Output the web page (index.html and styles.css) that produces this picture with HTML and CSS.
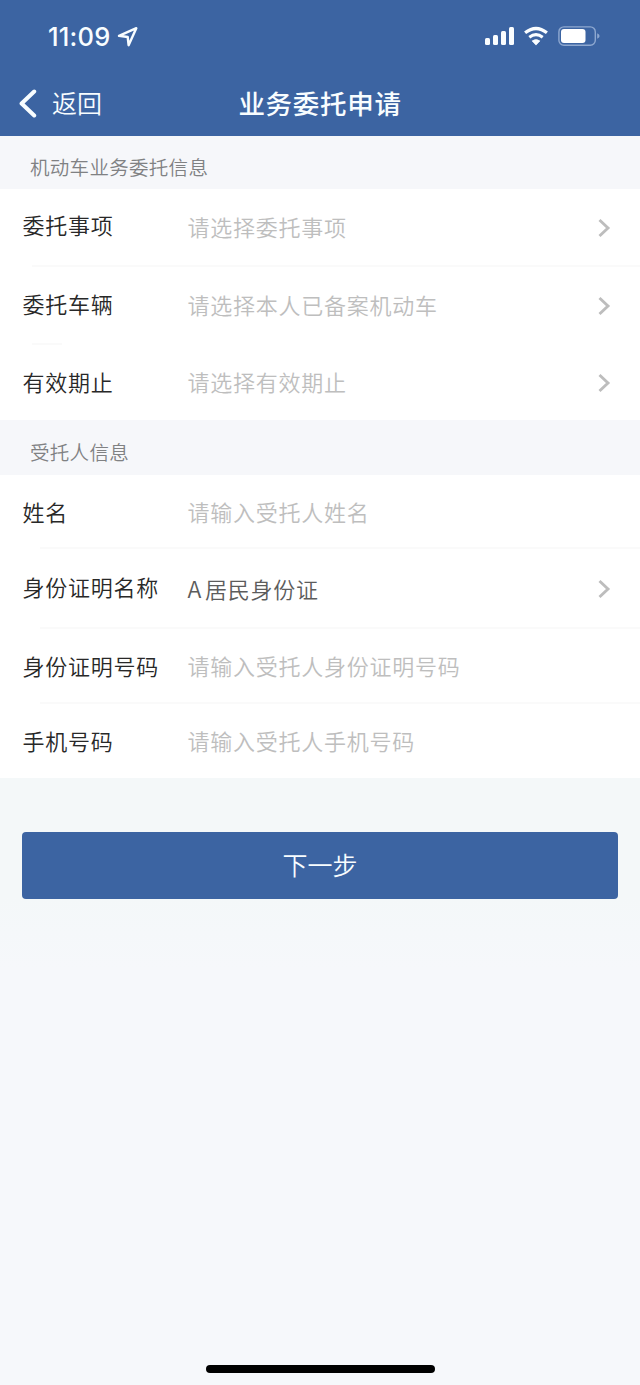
FILE: index.html
```html
<!DOCTYPE html>
<html lang="zh-CN">
<head>
<meta charset="utf-8">
<title>业务委托申请</title>
<link rel="stylesheet" href="styles.css">
</head>
<body>
<div class="screen">
  <header class="header">
    <div class="status">
      <div class="clock">
        <span class="time">11:09</span>
        <svg class="locate" width="22" height="22" viewBox="0 0 22 22"><path d="M2 9.8 19.3 2.2 11.6 19.2 10.7 11z" fill="none" stroke="#f8fdff" stroke-width="2.4" stroke-linejoin="round"/></svg>
      </div>
      <svg class="signals" width="116" height="24" viewBox="0 0 116 24">
        <g fill="#fafdff">
          <rect x="1" y="14" width="5" height="7" rx="1.5"/>
          <rect x="9" y="11" width="5" height="10" rx="1.5"/>
          <rect x="17" y="7" width="5" height="14" rx="1.5"/>
          <rect x="25" y="3" width="5" height="18" rx="1.5"/>
          <path d="M48.1 16.9Q52 14.3 55.9 16.9L52 21.1z" stroke="#fafdff" stroke-width=".7" stroke-linejoin="round"/>
        </g>
        <path d="M41.1 8.8Q52 .2 62.9 8.8" fill="none" stroke="#fafdff" stroke-width="3.2"/>
        <path d="M45.3 13.2Q52 8.1 58.7 13.2" fill="none" stroke="#fafdff" stroke-width="3"/>
        <rect x="74.9" y="2.9" width="36.4" height="18.3" rx="5" fill="none" stroke="#8ea8d0" stroke-width="1.4"/>
        <rect x="77" y="5" width="24.5" height="14" rx="3" fill="#fff"/>
        <path d="M113.2 9.2Q115.6 10.2 115.6 12T113.2 14.8z" fill="#8ea8d0"/>
      </svg>
    </div>
    <nav class="nav">
      <a class="back"><svg width="18" height="30" viewBox="0 0 18 30"><path d="M15.2 2.5 2.6 14.5 15.2 26.5" fill="none" stroke="#f8fdff" stroke-width="4" stroke-linecap="round" stroke-linejoin="round"/></svg><span>返回</span></a>
      <h1 class="title">业务委托申请</h1>
    </nav>
  </header>

  <main>
    <section class="vehicle">
      <h2 class="section-title">机动车业务委托信息</h2>
      <div class="row item"><span class="label">委托事项</span><span class="value hint">请选择委托事项</span><svg class="arrow" width="14" height="20" viewBox="0 0 14 20"><path d="M1.5 2 10 10 1.5 18"/></svg></div>
      <div class="row car"><span class="label">委托车辆</span><span class="value hint">请选择本人已备案机动车</span><svg class="arrow" width="14" height="20" viewBox="0 0 14 20"><path d="M1.5 2 10 10 1.5 18"/></svg></div>
      <div class="row expiry"><span class="label">有效期止</span><span class="value hint">请选择有效期止</span><svg class="arrow" width="14" height="20" viewBox="0 0 14 20"><path d="M1.5 2 10 10 1.5 18"/></svg></div>
    </section>
    <section class="agent">
      <h2 class="section-title">受托人信息</h2>
      <div class="row name"><span class="label">姓名</span><span class="value hint">请输入受托人姓名</span></div>
      <div class="row id-type"><span class="label">身份证明名称</span><span class="value"><span class="code">A</span>居民身份证</span><svg class="arrow" width="14" height="20" viewBox="0 0 14 20"><path d="M1.5 2 10 10 1.5 18"/></svg></div>
      <div class="row id-number"><span class="label">身份证明号码</span><span class="value hint">请输入受托人身份证明号码</span></div>
      <div class="row phone"><span class="label">手机号码</span><span class="value hint">请输入受托人手机号码</span></div>
    </section>
  </main>
  <div class="actions"><button class="next">下一步</button></div>
  <footer class="footer"><div class="home-bar"></div></footer>
</div>
</body>
</html>
```
FILE: styles.css
```css
* { box-sizing: border-box; }
body { margin: 0; background: #f6f8fb; font-family: "Noto Sans CJK SC", sans-serif; font-weight: 350; }
.screen { width: 640px; height: 1385px; display: flex; flex-direction: column; overflow: hidden; }
.header { height: 136px; background: #3c64a2; color: #f8fdff; }
.status { height: 72px; padding: 0 40px 0 48px; display: flex; justify-content: space-between; align-items: center; }
.clock { display: flex; align-items: center; gap: 7px; padding-top: 1px; }
.time { font: 500 25.5px/30px Inter, sans-serif; letter-spacing: .2px; }
.nav { height: 64px; padding: 0 19px 3px; display: grid; grid-template-columns: 1fr auto 1fr; align-items: center; }
.back { display: flex; align-items: center; gap: 15px; font-size: 25px; line-height: 36px; }
.back svg { margin-top: 2px; }
.back span { margin-top: -1px; }
.title { margin: 0; font-size: 26.5px; line-height: 38px; font-weight: 500; letter-spacing: .7px; }
.section-title { margin: 0; padding-left: 30px; font-size: 19.5px; font-weight: 350; letter-spacing: .3px; color: #808183; background: #f6f7fa; }
.vehicle .section-title { height: 53px; line-height: 61px; }
.agent .section-title { height: 55px; line-height: 64px; }
.row { display: grid; grid-template-columns: 165px 1fr 14px; align-items: start; padding: 0 28px 0 22.5px; background: #fff no-repeat right bottom / 608px 2px; font-size: 22px; line-height: 32px; letter-spacing: .75px; }
.label { color: #282828; }
.value { color: #5c5c5c; }
.hint { color: #bebebe; }
.code { font-size: 23px; letter-spacing: 3.6px; }
.arrow { fill: none; stroke: #bdbdbd; stroke-width: 2.9; }
.item { height: 78px; padding-top: 19px; background-image: linear-gradient(#fafafa, #fafafa); }
.car { height: 78px; padding-top: 20px; background-image: linear-gradient(#fafafa, #fafafa); background-size: 30px 2px; background-position: 32px bottom; }
.expiry { height: 75px; padding-top: 20px; }
.item .value, .id-type .value { padding-top: 2px; }
.car .value { padding-top: 1px; }
.item .arrow { margin-top: 10px; }
.car .arrow { margin-top: 9px; }
.expiry .arrow { margin-top: 8px; }
.name { height: 74px; padding-top: 20px; background-image: linear-gradient(#fafafa, #fafafa); background-size: 600px 2px; }
.id-type { height: 80px; padding-top: 21px; background-image: linear-gradient(#fafafa, #fafafa); background-size: 600px 2px; }
.id-type .arrow { margin-top: 9px; }
.id-number { height: 75px; padding-top: 20px; background-image: linear-gradient(#fafafa, #fafafa); background-size: 600px 2px; }
.phone { height: 74px; padding-top: 20px; }
.actions { flex: 1; padding: 54px 22px 0; background: linear-gradient(#f4f8f9 0, #f4f8f9 120px, #f6f8fb 190px); }
.next { display: block; width: 100%; height: 67px; padding: 0 0 2px; border: 0; border-radius: 4px; background: #3c64a2; color: #f8fdff; font: 350 25px/65px "Noto Sans CJK SC", sans-serif; }
.footer { height: 20px; display: flex; justify-content: center; }
.home-bar { width: 229px; height: 8px; border-radius: 4px; background: #000; }
```
